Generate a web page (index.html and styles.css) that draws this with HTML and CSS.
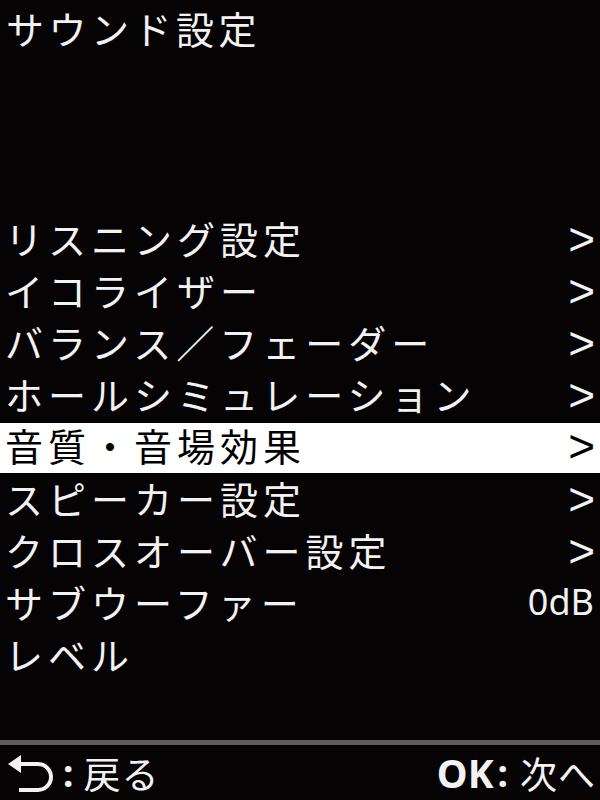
FILE: index.html
```html
<!DOCTYPE html>
<html lang="ja">
<head>
<meta charset="utf-8">
<link rel="stylesheet" href="styles.css">
</head>
<body>
<div class="screen">
  <div class="title">サウンド設定</div>
  <ul class="menu">
    <li class="row"><span class="label">リスニング設定</span><span class="arrow">&gt;</span></li>
    <li class="row"><span class="label">イコライザー</span><span class="arrow">&gt;</span></li>
    <li class="row"><span class="label">バランス／フェーダー</span><span class="arrow">&gt;</span></li>
    <li class="row"><span class="label">ホールシミュレーション</span><span class="arrow">&gt;</span></li>
    <li class="row selected"><span class="label">音質・音場効果</span><span class="arrow">&gt;</span></li>
    <li class="row"><span class="label">スピーカー設定</span><span class="arrow">&gt;</span></li>
    <li class="row"><span class="label">クロスオーバー設定</span><span class="arrow">&gt;</span></li>
    <li class="row"><span class="label">サブウーファー</span><span class="value">0dB</span></li>
    <li class="row"><span class="label">レベル</span></li>
  </ul>
  <div class="spacer"></div>
  <div class="footer">
    <div class="hint back">
      <svg class="back-icon" width="46" height="40" viewBox="0 0 46 40">
        <path d="M11 11 H30 A13 13 0 0 1 30 37 H11" fill="none" stroke="#f2f2f2" stroke-width="4"/>
        <path d="M0 11 L13 2 L13 20 Z" fill="#f2f2f2"/>
      </svg>
      <span class="colon">:</span><span class="hint-text">戻る</span>
    </div>
    <div class="hint ok">
      <span class="ok-key">OK</span><span class="colon">:</span><span class="hint-text">次へ</span>
    </div>
  </div>
</div>
</body>
</html>
```
FILE: styles.css
```css
html, body {
  margin: 0;
  padding: 0;
  background: #050304;
}
.screen {
  width: 600px;
  height: 800px;
  display: flex;
  flex-direction: column;
  background: #050304;
  color: #f2f2f2;
  font-family: "Noto Sans CJK JP", "Noto Sans", sans-serif;
  overflow: hidden;
}
.title {
  height: 215px;
  font-size: 38px;
  line-height: 55px;
  letter-spacing: 4.5px;
  padding-left: 6px;
  box-sizing: border-box;
  white-space: nowrap;
}
.menu {
  list-style: none;
  margin: 0;
  padding: 0;
}
.row {
  height: 52px;
  font-size: 38px;
  display: flex;
  justify-content: space-between;
  align-items: center;
  padding: 0 6px 0 5px;
  white-space: nowrap;
}
.label {
  letter-spacing: 5px;
  line-height: 46px;
  padding-bottom: 6px;
}
.row.selected {
  background: #ffffff;
  color: #000000;
  height: 50px;
  margin-bottom: 2px;
}
.arrow {
  font-family: "Liberation Sans", sans-serif;
  font-size: 46px;
  line-height: 46px;
  padding-bottom: 4px;
  margin-right: -1px;
}
.value {
  font-family: "Noto Sans", sans-serif;
  font-size: 36px;
  line-height: 46px;
  padding-bottom: 6px;
}
.spacer {
  flex: 1;
}
.footer {
  height: 55px;
  border-top: 5px solid #5c5c5c;
  display: flex;
  justify-content: space-between;
  align-items: center;
  padding: 0 4px 0 8px;
  font-size: 37px;
}
.hint {
  display: flex;
  align-items: center;
}
.back-icon {
  margin-right: 7px;
}
.colon {
  font-family: "Noto Sans", sans-serif;
  font-weight: bold;
  margin: 0 10px 0 2px;
}
.ok-key {
  font-family: "Noto Sans", sans-serif;
  font-weight: bold;
  font-size: 39px;
}
.ok .colon {
  margin: 0 12px 0 4px;
}
.hint-text {
  letter-spacing: 1px;
}
```
